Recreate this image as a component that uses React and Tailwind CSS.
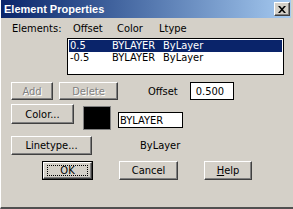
import React from "react";

const font = "font-['Liberation_Sans_Narrow','DejaVu_Sans_Condensed',Arial,sans-serif] text-[11px] leading-[13px]";
const raised =
  "border border-t-white border-l-white border-r-[#404040] border-b-[#404040] shadow-[inset_-1px_-1px_#808080] bg-[#d4d0c8] flex items-center justify-center text-black";

function Button({ className = "", children, disabled }) {
  return (
    <div className={`${raised} ${className}`}>
      <span className={disabled ? "text-[#808080] [text-shadow:1px_1px_0_#fff]" : ""}>{children}</span>
    </div>
  );
}

export default function App() {
  return (
    <div className={`${font} w-[293px] h-[209px] bg-[#d4d0c8] text-black flex flex-col border-l border-l-white border-b-2 border-b-[#505050] overflow-hidden`}>
      {/* title bar */}
      <div className="h-[18px] w-[291px] -ml-px bg-gradient-to-r from-[#0a246a] to-[#a6caf0] flex items-center justify-between pl-[4px] pr-[1px]">
        <span className="text-white font-bold text-[11px] font-['Liberation_Sans',Arial,sans-serif]">Element Properties</span>
        <div className="w-[16px] h-[14px] border border-t-white border-l-white border-r-[#404040] border-b-[#404040] shadow-[inset_-1px_-1px_#808080] bg-[#d4d0c8] flex items-center justify-center">
          <svg width="8" height="7" viewBox="0 0 8 7">
            <path d="M0 0h2l2 2.2L6 0h2L5 3.5 8 7H6L4 4.8 2 7H0l3-3.5z" fill="#000" />
          </svg>
        </div>
      </div>

      {/* column headers */}
      <div className="flex mt-[4px] pl-[11px]">
        <span className="w-[61px]">Elements:</span>
        <span className="w-[44px]">Offset</span>
        <span className="w-[42px]">Color</span>
        <span>Ltype</span>
      </div>

      {/* list */}
      <div className="ml-[66px] mt-[3px] w-[217px] h-[37px] bg-white border border-black p-px text-[11px] leading-[12px]">
        <div className="h-[12px] bg-[#0a246a] text-white flex pl-[1px]">
          <span className="w-[42px]">0.5</span>
          <span className="w-[51px]">BYLAYER</span>
          <span>ByLayer</span>
        </div>
        <div className="h-[12px] flex pl-[1px]">
          <span className="w-[42px]">-0.5</span>
          <span className="w-[51px]">BYLAYER</span>
          <span>ByLayer</span>
        </div>
      </div>

      {/* add / delete / offset */}
      <div className="flex items-center mt-[7px] pl-[10px]">
        <Button disabled className="w-[42px] h-[18px]">Add</Button>
        <Button disabled className="ml-[6px] w-[59px] h-[18px]">Delete</Button>
        <span className="ml-[30px]">Offset</span>
        <div className="ml-[12px] w-[44px] h-[18px] bg-white border border-black pl-[5px] flex items-center">0.500</div>
      </div>

      {/* color */}
      <div className="flex items-start mt-[4px] pl-[10px]">
        <Button className="w-[63px] h-[20px]">Color...</Button>
        <div className="ml-[9px] mt-[2px] w-[28px] h-[24px] bg-black border border-[#808080]" />
        <div className="ml-[7px] mt-[8px] w-[65px] h-[16px] bg-white border border-black pl-px flex items-center">BYLAYER</div>
      </div>

      {/* linetype */}
      <div className="flex items-center mt-[6px] pl-[10px]">
        <Button className="w-[81px] h-[19px]">Linetype...</Button>
        <span className="ml-[48px]">ByLayer</span>
      </div>

      {/* dialog buttons */}
      <div className="flex items-center mt-[6px] pl-[41px]">
        <div className="w-[51px] h-[19px] border border-black flex">
          <div className={`${raised} flex-1`}>
            <div className="w-[41px] h-[11px] border border-dotted border-black flex items-center justify-center">OK</div>
          </div>
        </div>
        <Button className="ml-[26px] w-[59px] h-[19px]">Cancel</Button>
        <Button className="ml-[26px] w-[48px] h-[19px]">
          <span className="underline">H</span>elp
        </Button>
      </div>
    </div>
  );
}
